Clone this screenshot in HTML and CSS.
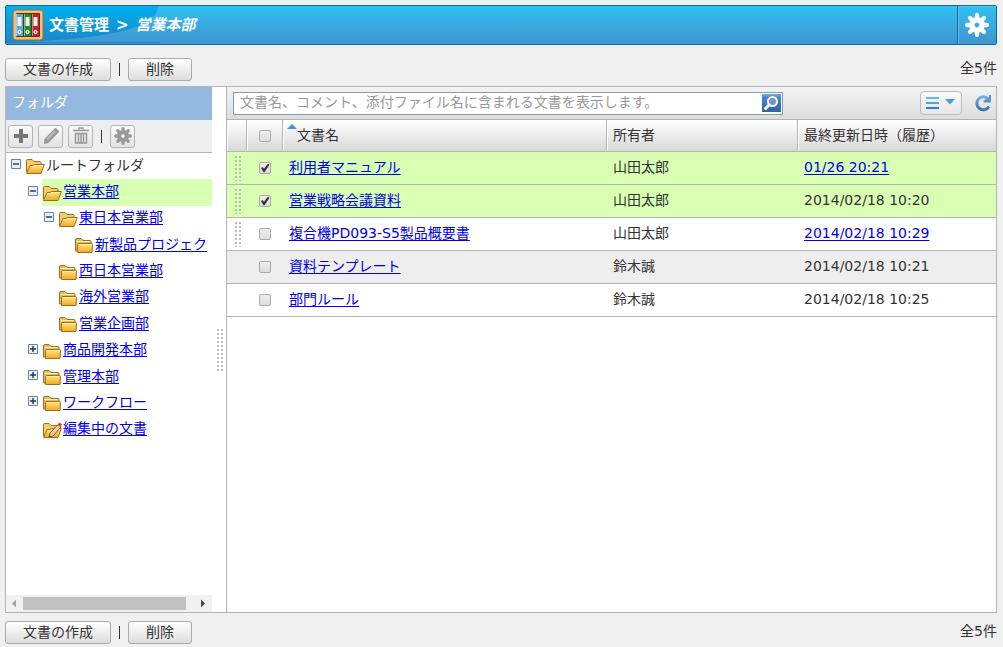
FILE: index.html
```html
<!DOCTYPE html>
<html lang="ja">
<head>
<meta charset="utf-8">
<title>文書管理</title>
<link rel="stylesheet" href="styles.css">
</head>
<body>
<svg class="defs" aria-hidden="true">
  <defs>
    <linearGradient id="gold" x1="0" y1="0" x2="0" y2="1"><stop offset="0" stop-color="#ffe58a"/><stop offset="1" stop-color="#f3a81e"/></linearGradient>
    <linearGradient id="sky" x1="0" y1="0" x2="0" y2="1"><stop offset="0" stop-color="#00b0ee"/><stop offset="1" stop-color="#1b86c9"/></linearGradient>
    <linearGradient id="glass" x1="0" y1="0" x2="0" y2="1"><stop offset="0" stop-color="#7fa9e6"/><stop offset="0.2" stop-color="#4a82cf"/><stop offset="1" stop-color="#2e63a8"/></linearGradient>
    <linearGradient id="turn" x1="0" y1="0" x2="0" y2="1"><stop offset="0" stop-color="#76aedb"/><stop offset="1" stop-color="#3976b0"/></linearGradient>
    <linearGradient id="azure" x1="0" y1="0" x2="0" y2="1"><stop offset="0" stop-color="#62bdf6"/><stop offset="1" stop-color="#2b83d6"/></linearGradient>
  </defs>
  <symbol id="folder" viewBox="0 0 20 16">
    <path d="M1.500 14V3q0-1.500 1.500-1.500h4l2 2h7q1 0 1 1v9.500z" fill="#e9bd55" stroke="#9b7028"/>
    <path d="M2.500 4.500h13" stroke="#fff0b5"/>
    <path d="M3.500 15.500v-8q0-1 1-1h13q1 0 1 1l-.5 8z" fill="url(#gold)" stroke="#a06c18"/>
    <path d="M5 7.500h12" stroke="#fff3b0"/>
  </symbol>
  <symbol id="folder-open" viewBox="0 0 20 16">
    <path d="M1.500 14V2.500q0-1 1-1h4.500l2 2h6q1 0 1 1v3" fill="#f5cc68" stroke="#9b7028"/>
    <path d="M1.500 15.500l3.500-8h3l1.500-1h9.800l-3.300 9z" fill="url(#gold)" stroke="#a06c18" stroke-linejoin="round"/>
    <path d="M5.500 8.500h3l1.500-1h8" fill="none" stroke="#fff3b0"/>
  </symbol>
  <symbol id="minus-box" viewBox="0 0 10 10"><path d="M.5.5h9v9h-9z" fill="#e9f1f8" stroke="#6583a6"/><path d="M2 5h6" stroke="#234" stroke-width="1.400"/></symbol>
  <symbol id="plus-box" viewBox="0 0 10 10"><path d="M.5.5h9v9h-9z" fill="#e9f1f8" stroke="#6583a6"/><path d="M2 5h6M5 2v6" stroke="#234" stroke-width="1.400"/></symbol>
  <symbol id="gear" viewBox="0 0 22 22">
    <path d="M11 2v5M11 15v5M2 11h5M15 11h5M4.600 4.600l3.500 3.500M13.900 13.900l3.500 3.500M17.400 4.600l-3.500 3.500M8.100 13.900l-3.500 3.500" stroke="currentColor" stroke-width="4" stroke-linecap="round"/>
    <circle cx="11" cy="11" r="5" fill="none" stroke="currentColor" stroke-width="4.500"/>
  </symbol>
</svg>

<header class="banner">
  <svg class="sheen" viewBox="0 0 154 38" aria-hidden="true"><path d="M0 0h152q0 32-142 36H0z" fill="url(#sky)"/><path d="M0 36.500h154" stroke="#1677b4" opacity=".6"/></svg>
  <svg class="app-icon" viewBox="0 0 32 32" aria-hidden="true">
    <rect x="1" y="1" width="30" height="30" rx="3" fill="#efc27a" stroke="#a86b22"/>
    <rect x="4" y="4" width="24" height="24" rx="1" fill="#5b3211"/>
    <path d="M4 5h7v22H4z" fill="#57a9e6"/><path d="M12 5h7v22h-7z" fill="#14952a"/><path d="M20 5h7v22h-7z" fill="#c9202e"/>
    <path d="M5.500 8h4v9h-4zM13.500 8h4v9h-4zM21.500 8h4v9h-4z" fill="#f5f5f0"/>
    <path d="M4 5h1v22H4zM12 5h1v22h-1zM20 5h1v22h-1z" fill="#fff" opacity=".4"/>
    <g fill="#fff"><circle cx="7.500" cy="23" r="2"/><circle cx="15.500" cy="23" r="2"/><circle cx="23.500" cy="23" r="2"/></g>
    <g fill="#444"><circle cx="7.500" cy="23" r=".8"/><circle cx="15.500" cy="23" r=".8"/><circle cx="23.500" cy="23" r=".8"/></g>
  </svg>
  <h1 class="crumbs"><span>文書管理</span><span>&gt;</span><em>営業本部</em></h1>
  <button class="settings" type="button" aria-label="設定"><svg class="settings-icon"><use href="#gear"/></svg></button>
</header>

<div class="actions">
  <button class="btn" type="button">文書の作成</button><span class="sep"></span><button class="btn" type="button">削除</button>
  <span class="count">全5件</span>
</div>

<main class="panel">
  <aside class="side">
    <h2 class="side-title">フォルダ</h2>
    <div class="side-tools">
      <button class="tool" type="button" aria-label="追加"><svg viewBox="0 0 20 20"><path d="M8 3h4v5h5v4h-5v5H8v-5H3V8h5z" fill="#777"/></svg></button>
      <button class="tool" type="button" aria-label="編集"><svg viewBox="0 0 20 20"><path d="M3 18l.5-5L13.500 2.500q1-1 2 0l2 2q1 1 0 2L7.500 17z" fill="#999"/><path d="M6 13.500l8-8.500" stroke="#bbb" stroke-width="2"/></svg></button>
      <button class="tool" type="button" aria-label="削除"><svg viewBox="0 0 20 20"><path d="M8 3.500V2h4v1.500M2 4.500h16M4.500 7.500h11v9.500h-11zM7.500 8v9M10 8v9M12.500 8v9" fill="none" stroke="#999" stroke-width="1.500"/></svg></button>
      <span class="sep"></span>
      <button class="tool" type="button" aria-label="フォルダの設定"><svg class="tool-gear"><use href="#gear"/></svg></button>
    </div>
    <ul class="tree">
      <li class="node lv0"><svg class="toggle"><use href="#minus-box"/></svg><span class="leaf"><svg class="folder"><use href="#folder-open"/></svg><span>ルートフォルダ</span></span></li>
      <li class="node lv1"><svg class="toggle"><use href="#minus-box"/></svg><span class="leaf current"><svg class="folder"><use href="#folder-open"/></svg><a href="#">営業本部</a></span></li>
      <li class="node lv2"><svg class="toggle"><use href="#minus-box"/></svg><span class="leaf"><svg class="folder"><use href="#folder-open"/></svg><a href="#">東日本営業部</a></span></li>
      <li class="node lv3"><span class="toggle"></span><span class="leaf"><svg class="folder"><use href="#folder"/></svg><a href="#">新製品プロジェク</a></span></li>
      <li class="node lv2"><span class="toggle"></span><span class="leaf"><svg class="folder"><use href="#folder"/></svg><a href="#">西日本営業部</a></span></li>
      <li class="node lv2"><span class="toggle"></span><span class="leaf"><svg class="folder"><use href="#folder"/></svg><a href="#">海外営業部</a></span></li>
      <li class="node lv2"><span class="toggle"></span><span class="leaf"><svg class="folder"><use href="#folder"/></svg><a href="#">営業企画部</a></span></li>
      <li class="node lv1"><svg class="toggle"><use href="#plus-box"/></svg><span class="leaf"><svg class="folder"><use href="#folder"/></svg><a href="#">商品開発本部</a></span></li>
      <li class="node lv1"><svg class="toggle"><use href="#plus-box"/></svg><span class="leaf"><svg class="folder"><use href="#folder"/></svg><a href="#">管理本部</a></span></li>
      <li class="node lv1"><svg class="toggle"><use href="#plus-box"/></svg><span class="leaf"><svg class="folder"><use href="#folder"/></svg><a href="#">ワークフロー</a></span></li>
      <li class="node lv1"><span class="toggle"></span><span class="leaf"><svg class="folder" viewBox="0 0 20 16"><use href="#folder-open" width="20" height="16"/><path d="M7 15l1-4 8-8.500 3 2.500-8 9z" fill="#f3cf9c" stroke="#8a5a24"/><path d="M15.500 2.500L17.500.5l2.500 2-1.500 2.500z" fill="#e8413c"/><path d="M7 15l.6-2 1.400 1.200z" fill="#333"/></svg><a href="#">編集中の文書</a></span></li>
    </ul>
    <div class="scrollbar" aria-hidden="true">
      <svg class="arrow" viewBox="0 0 17 17"><path d="M10 4.500v8L6 8.500z" fill="#a3a3a3"/></svg>
      <div class="track"><div class="thumb"></div></div>
      <svg class="arrow" viewBox="0 0 17 17"><path d="M6 4.500v8l4-4z" fill="#444"/></svg>
    </div>
  </aside>
  <div class="splitter"><div class="grip long"></div></div>

  <section class="docs">
    <div class="search-bar">
      <form class="search">
        <input class="search-input" type="text" aria-label="文書の検索" placeholder="文書名、コメント、添付ファイル名に含まれる文書を表示します。">
        <button class="search-go" type="button" aria-label="検索"><svg viewBox="0 0 20 20"><rect x="0" y="1" width="19" height="18" fill="url(#glass)"/><circle cx="10.500" cy="8.500" r="4.500" fill="#6897d8" stroke="#fff" stroke-width="2"/><path d="M7 12l-3.500 3.500" stroke="#fff" stroke-width="3" stroke-linecap="round"/></svg></button>
      </form>
      <button class="view" type="button" aria-label="表示"><svg viewBox="0 0 30 14"><path d="M0 1h13v2H0z" fill="#5fbdf8"/><path d="M0 6h13v2H0z" fill="#4ea4ee"/><path d="M0 11h13v2H0z" fill="#3c78dc"/><path d="M19 3h10L24 8.500z" fill="#45a3e2"/></svg></button>
      <button class="reload" type="button" aria-label="更新"><svg viewBox="0 0 18 18"><path d="M14.200 5A6.500 6.500 0 1 0 15 12.500" fill="none" stroke="url(#turn)" stroke-width="3"/><path d="M17 1v7.500H9.500V6.500l5.500-3V1z" fill="#5c96c8"/></svg></button>
    </div>
    <table class="list">
      <colgroup><col class="c-grip"><col class="c-check"><col><col class="c-owner"><col class="c-date"></colgroup>
      <thead><tr><th></th><th class="pick"><input class="check" type="checkbox" aria-label="すべて選択"></th><th class="sorted">文書名</th><th>所有者</th><th>最終更新日時（履歴）</th></tr></thead>
      <tbody>
        <tr class="on"><td><div class="grip"></div></td><td class="pick"><input class="check" type="checkbox" checked aria-label="利用者マニュアル"></td><td><a href="#">利用者マニュアル</a></td><td>山田太郎</td><td><a href="#">01/26 20:21</a></td></tr>
        <tr class="on"><td><div class="grip"></div></td><td class="pick"><input class="check" type="checkbox" checked aria-label="営業戦略会議資料"></td><td><a href="#">営業戦略会議資料</a></td><td>山田太郎</td><td>2014/02/18 10:20</td></tr>
        <tr><td><div class="grip"></div></td><td class="pick"><input class="check" type="checkbox" aria-label="複合機PD093-S5製品概要書"></td><td><a href="#">複合機PD093-S5製品概要書</a></td><td>山田太郎</td><td><a href="#">2014/02/18 10:29</a></td></tr>
        <tr class="alt"><td></td><td class="pick"><input class="check" type="checkbox" aria-label="資料テンプレート"></td><td><a href="#">資料テンプレート</a></td><td>鈴木誠</td><td>2014/02/18 10:21</td></tr>
        <tr><td></td><td class="pick"><input class="check" type="checkbox" aria-label="部門ルール"></td><td><a href="#">部門ルール</a></td><td>鈴木誠</td><td>2014/02/18 10:25</td></tr>
      </tbody>
    </table>
  </section>
</main>

<div class="actions bottom">
  <button class="btn" type="button">文書の作成</button><span class="sep"></span><button class="btn" type="button">削除</button>
  <span class="count">全5件</span>
</div>
</body>
</html>
```

FILE: styles.css
```css
* { box-sizing: border-box; }
html { height: 100%; }
body {
  margin: 0;
  height: 100%;
  padding: 5px 6px 0 5px;
  display: flex;
  flex-direction: column;
  background: #f0f0f0;
  color: #333;
  font: 14px/20px "DejaVu Sans", "Noto Sans CJK JP", sans-serif;
  overflow: hidden;
}
button, input { font: inherit; color: inherit; margin: 0; }
button { padding: 0; cursor: pointer; }
svg { display: block; flex: none; }
a { color: #00e; text-underline-offset: 2px; }
.defs { position: absolute; width: 0; height: 0; }

/* banner */
.banner {
  position: relative;
  flex: none;
  height: 40px;
  display: flex;
  align-items: center;
  padding-left: 6px;
  border: 1px solid #0d6aa5;
  border-radius: 2px;
  background: linear-gradient(#30c0f2, #4095cf);
  color: #fff;
}
.sheen { position: absolute; left: 0; top: 0; width: 154px; height: 38px; }
.app-icon { position: relative; width: 32px; height: 32px; }
.crumbs {
  position: relative;
  flex: 1;
  display: flex;
  gap: 7px;
  margin: 0 0 0 5px;
  padding-bottom: 1px;
  font-size: 15px;
  line-height: 20px;
  white-space: nowrap;
}
.settings {
  align-self: stretch;
  width: 39px;
  display: grid;
  place-items: center;
  border: 0;
  border-left: 1px solid #0d6aa5;
  background: linear-gradient(#30c0f2, #4095cf);
  box-shadow: inset 1px 1px 0 #58c3ee;
  color: #fff;
}
.settings-icon { width: 24px; height: 24px; }

/* action rows */
.actions {
  flex: none;
  display: flex;
  align-items: center;
  height: 41px;
  padding-top: 7px;
}
.actions.bottom { height: 34px; padding-top: 4px; }
.btn {
  height: 23px;
  padding: 0 17px 2px;
  border: 1px solid #aaa;
  border-radius: 3px;
  background: linear-gradient(#fff, #ddd);
  line-height: 20px;
}
.sep { flex: none; width: 1px; height: 13px; margin: 0 8px; background: #333; }
.count { margin-left: auto; padding-bottom: 2px; }

/* panel */
.panel {
  flex: 1;
  min-height: 0;
  display: flex;
  border: 1px solid #b4b4b4;
  background: #fff;
}
.side { flex: 0 0 206px; display: flex; flex-direction: column; overflow: hidden; }
.side-title {
  flex: none;
  margin: 0;
  padding: 5px 6px 8px;
  background: #94b8de;
  color: #fff;
  font-size: 14px;
  font-weight: 400;
}
.side-tools {
  flex: none;
  height: 33px;
  display: flex;
  align-items: center;
  gap: 5px;
  padding-left: 2px;
  border-bottom: 1px solid #b4b4b4;
  background: #eee;
}
.side-tools .sep { margin: 0 3px; }
.tool {
  width: 25px;
  height: 23px;
  display: grid;
  place-items: center;
  border: 1px solid #b4b4b4;
  border-radius: 3px;
  background: linear-gradient(#fafafa, #e2e2e2);
  color: #999;
}
.tool svg { width: 20px; height: 20px; }
.tool .tool-gear { width: 18px; height: 18px; }

.tree {
  min-height: 290px;
  display: grid;
  grid-auto-rows: 1fr;
  margin: 0 0 auto;
  padding: 0;
  list-style: none;
  white-space: nowrap;
}
.node { display: flex; align-items: center; }
.lv0 { padding-left: 5px; }
.lv1 { padding-left: 22px; }
.lv2 { padding-left: 38px; }
.lv3 { padding-left: 54px; }
.toggle { flex: none; width: 10px; height: 10px; margin: 0 4px 4px 0; }
.leaf { flex: 1; align-self: stretch; display: flex; align-items: center; gap: 1px; padding-bottom: 3px; }
.leaf .folder { margin-top: 3px; }
.current { background: #d9ffb3; }
.folder { width: 20px; height: 16px; }

.scrollbar { flex: none; display: flex; height: 17px; background: #f1f1f1; }
.arrow { width: 17px; height: 17px; }
.track { flex: 1; padding: 2px 0; }
.thumb { width: 95%; height: 13px; background: #c1c1c1; }

.splitter { flex: 0 0 14px; display: grid; place-items: center; }
.grip {
  width: 8px;
  height: 25px;
  margin: auto;
  background: conic-gradient(#bbb 25%, transparent 0) 0 0 / 4px 4px;
}
.grip.long { height: 42px; }

/* documents */
.docs { flex: 1; min-width: 0; border-left: 1px solid #b4b4b4; }
.search-bar {
  display: flex;
  align-items: center;
  height: 33px;
  padding: 0 4px 0 6px;
  border-bottom: 1px solid #b4b4b4;
  background: linear-gradient(#f3f3f3, #ddd);
}
.search {
  flex: 0 1 550px;
  display: flex;
  align-items: center;
  height: 23px;
  margin-right: auto;
  border: 1px solid #7b9ebd;
  background: #fff;
}
.search-input {
  flex: 1;
  min-width: 0;
  height: 21px;
  padding: 0 6px 2px;
  border: 0;
  outline: 0;
  background: none;
}
.search-input::placeholder { color: #999; }
.search-go { width: 20px; height: 20px; border: 0; background: none; }
.view {
  width: 42px;
  height: 24px;
  display: grid;
  place-items: center;
  border: 1px solid #bbb;
  border-radius: 4px;
  background: linear-gradient(#fafafa, #e6e6e6);
}
.view svg { width: 30px; height: 14px; }
.reload { margin-left: 12px; border: 0; background: none; }
.reload svg { width: 18px; height: 18px; }

.list { width: 100%; table-layout: fixed; border-collapse: separate; border-spacing: 0; }
.c-grip { width: 20px; }
.c-check { width: 36px; }
.c-owner { width: 191px; }
.c-date { width: 198px; }
.list th, .list td {
  height: 33px;
  padding: 0 6px 2px;
  border-bottom: 1px solid #b4b4b4;
  text-align: left;
  font-weight: 400;
  white-space: nowrap;
}
.list th {
  height: 32px;
  background: linear-gradient(#fff, #d8d8d8);
  border-right: 1px solid #b4b4b4;
  box-shadow: inset 1px 0 0 #fff;
}
.list th:last-child { border-right: 0; }
.list td:first-child { padding: 0; }
.list .pick { padding: 0; text-align: center; }
.list .sorted { position: relative; padding-left: 14px; }
.sorted::before {
  content: "";
  position: absolute;
  left: 4px;
  top: 4px;
  width: 10px;
  height: 5px;
  background: #3d95d6;
  clip-path: polygon(50% 0, 100% 100%, 0 100%);
}
.on td { background: #d9ffb3; }
.alt td { background: #eee; }

.check {
  appearance: none;
  display: block;
  width: 12px;
  height: 12px;
  margin: 0 auto;
  border: 1px solid #aaa;
  border-radius: 2px;
  background: linear-gradient(#eee, #ddd);
}
.check:checked::before {
  content: "";
  display: block;
  width: 10px;
  height: 10px;
  background: #333;
  clip-path: polygon(10% 50%, 25% 40%, 40% 58%, 78% 8%, 95% 18%, 45% 92%, 35% 92%);
}
```
